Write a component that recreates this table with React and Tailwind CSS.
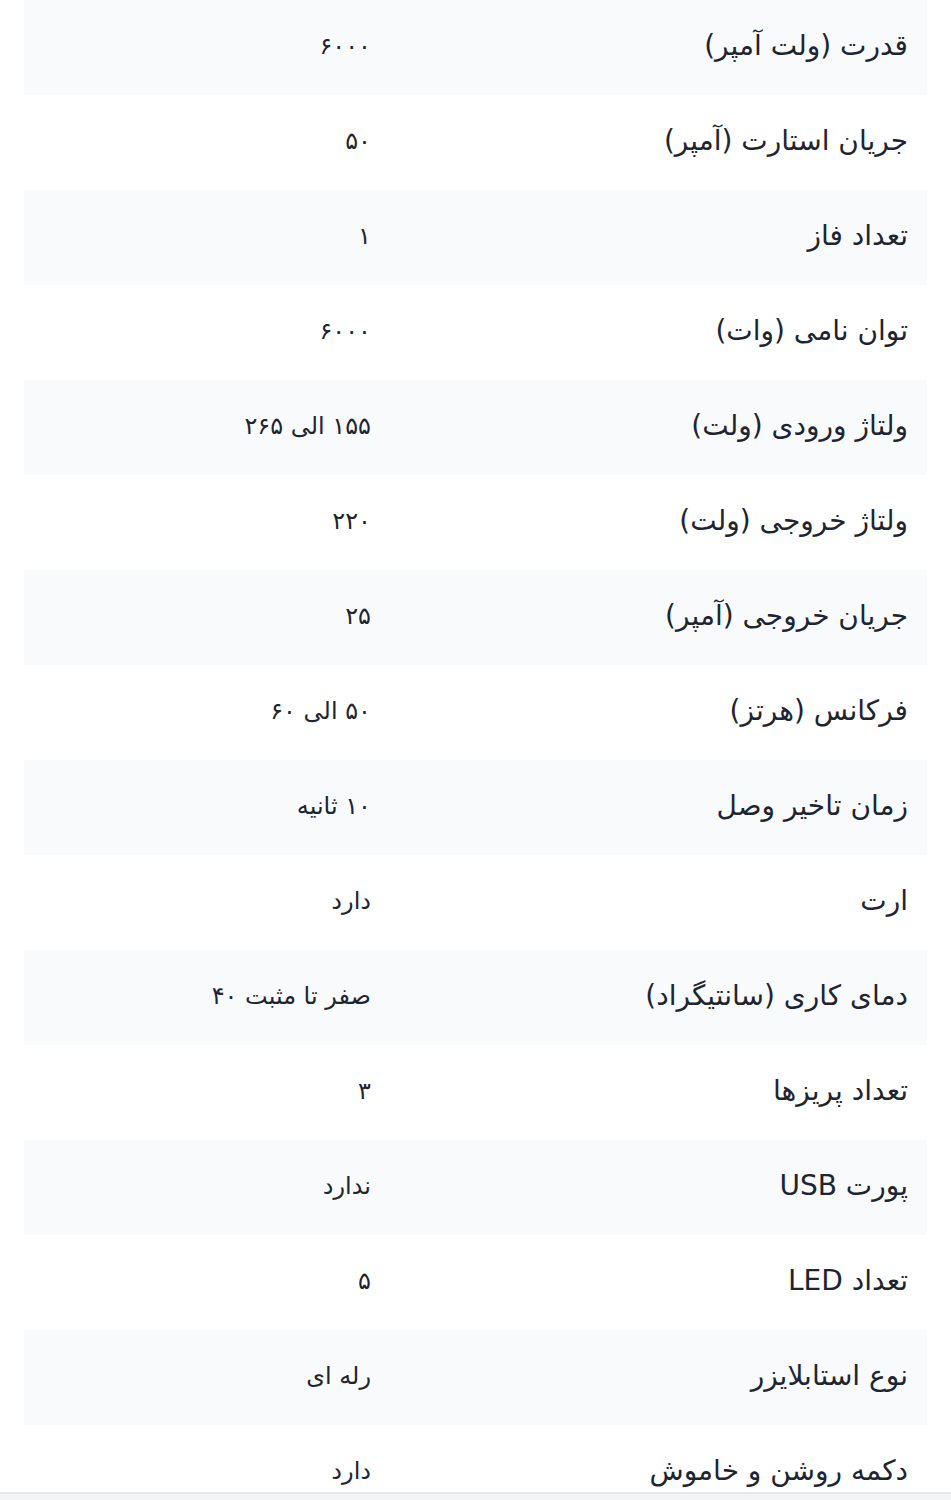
const specs = [
  ["قدرت (ولت آمپر)", "۶۰۰۰"],
  ["جریان استارت (آمپر)", "۵۰"],
  ["تعداد فاز", "۱"],
  ["توان نامی (وات)", "۶۰۰۰"],
  ["ولتاژ ورودی (ولت)", "۱۵۵ الی ۲۶۵"],
  ["ولتاژ خروجی (ولت)", "۲۲۰"],
  ["جریان خروجی (آمپر)", "۲۵"],
  ["فرکانس (هرتز)", "۵۰ الی ۶۰"],
  ["زمان تاخیر وصل", "۱۰ ثانیه"],
  ["ارت", "دارد"],
  ["دمای کاری (سانتیگراد)", "صفر تا مثبت ۴۰"],
  ["تعداد پریزها", "۳"],
  ["پورت USB", "ندارد"],
  ["تعداد LED", "۵"],
  ["نوع استابلایزر", "رله ای"],
  ["دکمه روشن و خاموش", "دارد"],
]

export default function App() {
  return (
    <div
      dir="rtl"
      className="relative h-[1500px] w-full overflow-hidden bg-white text-[#1e2530]"
      style={{ fontFamily: '"DejaVu Sans", "Noto Sans", sans-serif' }}
    >
      <div className="mx-6">
        {specs.map(([label, value], i) => (
          <div
            key={i}
            className={`grid h-[95px] grid-cols-[556px_1fr] items-center ${i % 2 === 0 ? "bg-[#f8fafc]" : "bg-white"}`}
          >
            <div className="-mt-1 pr-[19px] text-[28px]">{label}</div>
            <div className="-mt-1 text-[24px]">{value}</div>
          </div>
        ))}
      </div>
      <div className="absolute bottom-0 left-0 right-0 h-[8px] border-t-2 border-[#e5e7eb] bg-[#f3f4f6]"></div>
    </div>
  )
}
